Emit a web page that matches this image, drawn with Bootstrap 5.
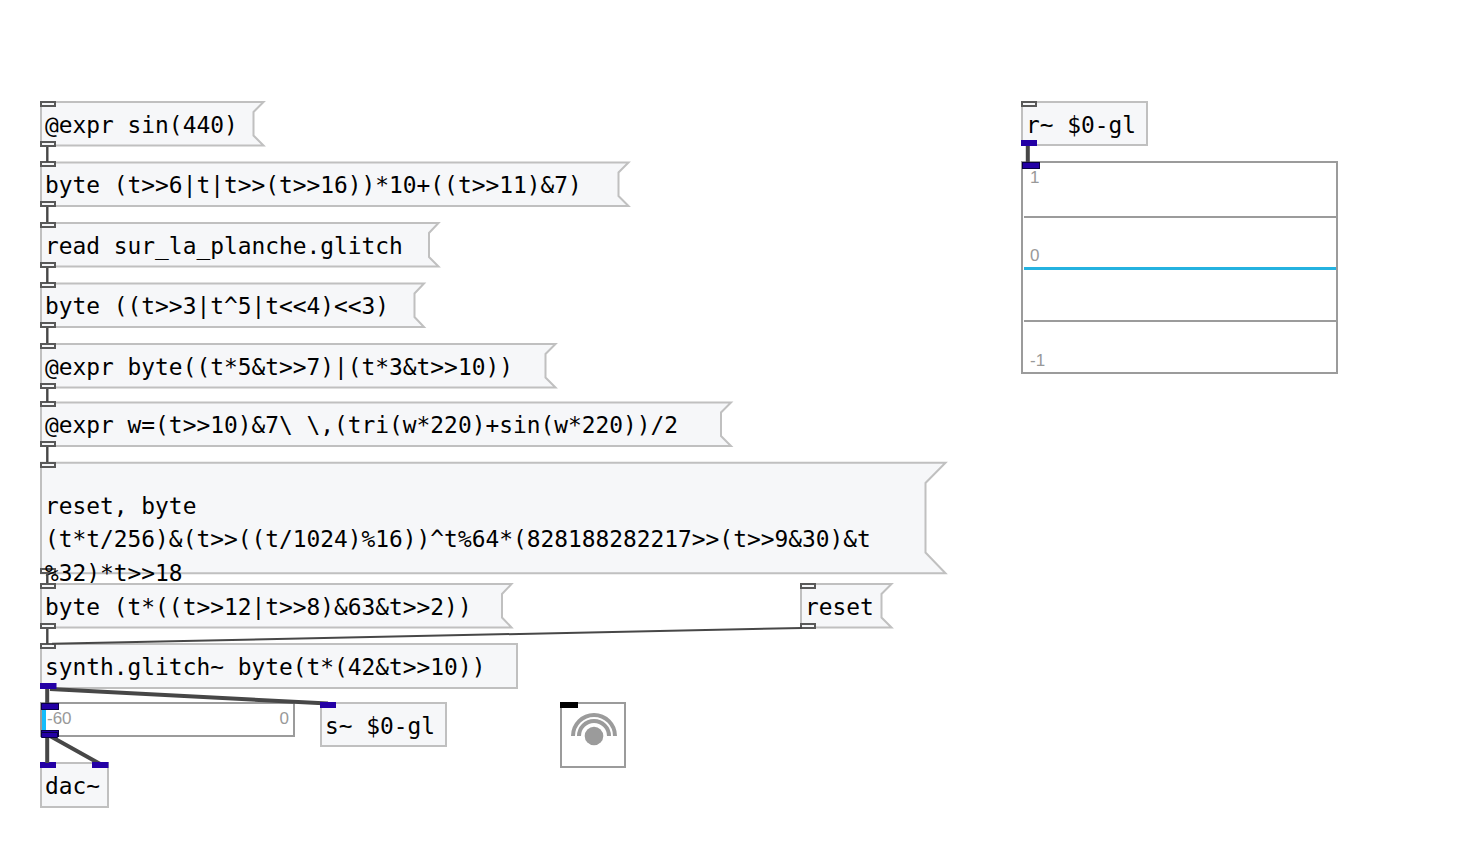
<!DOCTYPE html>
<html lang="en">
<head>
<meta charset="utf-8">
<meta name="viewport" content="width=device-width, initial-scale=1">
<title>synth.glitch~ patch</title>
<link href="https://cdn.jsdelivr.net/npm/bootstrap@5.3.0/dist/css/bootstrap.min.css" rel="stylesheet">
<style>
  .patch { height: 867px; font-family: "DejaVu Sans Mono", monospace; font-size: 22.87px; line-height: 33px; color: #000; }
  .obj, .port, .wires { position: absolute; }
  .wires { left: 0; top: 0; }
  .obj { height: 46px; padding: 8px 0 0 5px; white-space: pre; }
  .obj.box { border: 2px solid #c0c0c0; background: #f6f7f9; padding: 6px 0 0 3px; }
  .obj.gui { border: 2px solid #9b9b9b; background: #fff; padding: 0; font: 17px/20px "Liberation Sans", sans-serif; color: #999; }
  .obj > svg { position: absolute; left: 0; top: 0; overflow: visible; }
  .obj > span { position: relative; }
  .outline { fill: #f6f7f9; stroke: #c0c0c0; stroke-width: 2; }
  .port { left: 0; width: 16px; height: 6px; border: 2px solid #595959; background: #f6f7f9; }
  .box > .port { left: -2px; }
  .in { top: 0; } .out { bottom: 0; }
  .box > .in { top: -2px; } .box > .out { bottom: -2px; }
  .port.sig { background: #2300a5; border-color: #2300a5; }
  .gui > .port { left: -1px; top: -1px; width: 18px; height: 7px; border: 1px solid #090044; background: #2300a5; }
  .gui > .port.out { top: auto; bottom: -2px; }
  .gui > .port.black { left: -2px; top: -2px; height: 6px; background: #000; border-color: #000; }
  .col-a { left: 40px; }
  #m1 { top: 101px; } #m2 { top: 161px; } #m3 { top: 222px; } #m4 { top: 282px; }
  #m5 { top: 343px; } #m6 { top: 401px; } #m8 { top: 583px; }
  #m7 { top: 462px; height: 112px; padding-top: 28px; line-height: 33.4px; }
  #m9 { left: 800px; top: 583px; }
  #synth { top: 643px; width: 478px; }
  #send { left: 320px; top: 702px; width: 127px; height: 45px; }
  #dac { top: 762px; width: 69px; }
  #recv { left: 1021px; top: 101px; width: 127px; height: 45px; }
  #meter { top: 702px; width: 255px; height: 35px; padding: 5px 4px 0 5px; }
  #meter .level { left: 0; top: 0; width: 4px; height: 31px; background: #14bcfa; }
  #scope { left: 1021px; top: 161px; width: 317px; height: 213px; }
  #scope .tick { position: absolute; left: 7px; }
  #scope hr { position: absolute; left: 1px; right: 0; margin: 0; opacity: 1; border: 0; height: 2px; background: #9b9b9b; }
  #scope hr.trace { height: 3px; background: #24b2e0; }
  #spread { left: 560px; top: 702px; width: 66px; height: 66px; }
  .dacright { left: 50px !important; }
</style>
</head>
<body class="bg-white overflow-hidden">
<main class="patch position-relative overflow-hidden">

  <div class="obj col-a" id="m1"><svg width="226" height="46"><path class="outline" d="M1 1H223.500L213.500 11V34.500L223.500 44.500H1Z"/></svg><i class="port in"></i><i class="port out"></i><span>@expr sin(440)</span></div>
  <div class="obj col-a" id="m2"><svg width="592" height="46"><path class="outline" d="M1 1.500H588.500L578.500 11.500V35L588.500 45H1Z"/></svg><i class="port in"></i><i class="port out"></i><span>byte (t&gt;&gt;6|t|t&gt;&gt;(t&gt;&gt;16))*10+((t&gt;&gt;11)&amp;7)</span></div>
  <div class="obj col-a" id="m3"><svg width="402" height="46"><path class="outline" d="M1 1H398.500L389 11V35L398.500 44.500H1Z"/></svg><i class="port in"></i><i class="port out"></i><span>read sur_la_planche.glitch</span></div>
  <div class="obj col-a" id="m4"><svg width="386" height="46"><path class="outline" d="M1 1.500H384L374.500 11.500V35L384 45H1Z"/></svg><i class="port in"></i><i class="port out"></i><span>byte ((t&gt;&gt;3|t^5|t&lt;&lt;4)&lt;&lt;3)</span></div>
  <div class="obj col-a" id="m5"><svg width="518" height="46"><path class="outline" d="M1 1H515.500L505.500 11V34.500L515.500 44.500H1Z"/></svg><i class="port in"></i><i class="port out"></i><span>@expr byte((t*5&amp;t&gt;&gt;7)|(t*3&amp;t&gt;&gt;10))</span></div>
  <div class="obj col-a" id="m6"><svg width="694" height="46"><path class="outline" d="M1 1.500H691L681 11.500V35L691 45H1Z"/></svg><i class="port in"></i><i class="port out"></i><span>@expr w=(t&gt;&gt;10)&amp;7\ \,(tri(w*220)+sin(w*220))/2</span></div>
  <div class="obj col-a" id="m7"><svg width="908" height="112"><path class="outline" d="M1 .700H905.500L885.500 21V90.500L905.500 111.300H1Z"/></svg><i class="port in"></i><i class="port out"></i><span>reset, byte
(t*t/256)&amp;(t&gt;&gt;((t/1024)%16))^t%64*(828188282217&gt;&gt;(t&gt;&gt;9&amp;30)&amp;t
%32)*t&gt;&gt;18</span></div>
  <div class="obj col-a" id="m8"><svg width="474" height="46"><path class="outline" d="M1 1H471.500L462 11V34.500L471.500 44.500H1Z"/></svg><i class="port in"></i><i class="port out"></i><span>byte (t*((t&gt;&gt;12|t&gt;&gt;8)&amp;63&amp;t&gt;&gt;2))</span></div>
  <div class="obj" id="m9"><svg width="94" height="46"><path class="outline" d="M1 1H91.500L81.500 11V34.500L91.500 44.500H1Z"/></svg><i class="port in"></i><i class="port out"></i><span>reset</span></div>

  <div class="obj box col-a" id="synth"><i class="port in"></i><i class="port out sig"></i><span>synth.glitch~ byte(t*(42&amp;t&gt;&gt;10))</span></div>
  <div class="obj box" id="send"><i class="port in sig"></i><span>s~ $0-gl</span></div>
  <div class="obj box col-a" id="dac"><i class="port in sig"></i><i class="port in sig dacright"></i><span>dac~</span></div>
  <div class="obj box" id="recv"><i class="port in"></i><i class="port out sig"></i><span>r~ $0-gl</span></div>

  <div class="obj gui col-a d-flex justify-content-between" id="meter"><b class="level position-absolute"></b><i class="port in"></i><i class="port out"></i><span>-60</span><span>0</span></div>
  <div class="obj gui" id="spread"><i class="port black"></i>
    <svg width="62" height="63" fill="none" stroke="#9b9b9b" stroke-width="4"><circle cx="32" cy="32" r="9.300" fill="#9b9b9b" stroke="none"/><path d="M17 32a15 15 0 0 1 30 0M11 32a21 21 0 0 1 42 0"/></svg>
  </div>
  <div class="obj gui" id="scope"><i class="port in"></i>
    <span class="tick" style="top:5px">1</span><hr style="top:53px"><span class="tick" style="top:83px">0</span><hr class="trace" style="top:104px"><hr style="top:157px"><span class="tick" style="top:188px">-1</span>
  </div>

  <svg class="wires" width="1461" height="867" fill="none" stroke="#474747">
    <path stroke-width="2.400" d="M47.300 147V162M47.300 207V222M47.300 268V283M47.300 328V343M47.300 389V402M47.300 447V462M47.300 574V583M47.300 629V644"/>
    <path stroke-width="2" d="M802 628L52 643.700"/>
    <path stroke-width="4" d="M47.200 689V703M47.200 738V763M1027.800 146V162M50 689L328 703.500M50 736L102 765"/>
  </svg>
  <svg class="wires" width="1461" height="867" fill="#2300a5"><path d="M40 683h16.500v6H40zM320 702h16v6h-16zM92 762h16.500v6H92z"/><path stroke="#090044" d="M41.500 732.500h16v5h-16z"/></svg>
</main>
<script src="https://cdn.jsdelivr.net/npm/bootstrap@5.3.0/dist/js/bootstrap.bundle.min.js"></script>
</body>
</html>
